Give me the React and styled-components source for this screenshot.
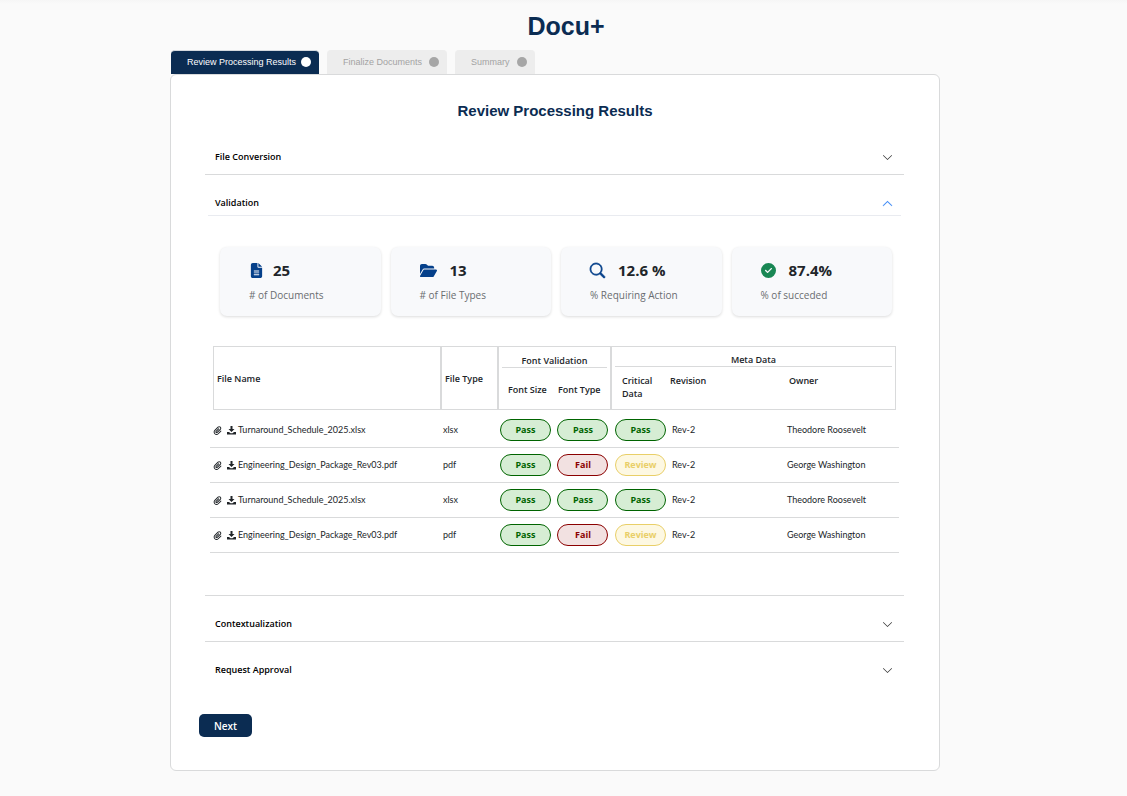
import React from "react";
import styled, { createGlobalStyle, css } from "styled-components";
import { FaFileLines, FaFolderOpen, FaCircleCheck, FaPaperclip } from "react-icons/fa6";
import { BsSearch, BsChevronDown, BsChevronUp } from "react-icons/bs";

const navy = "#0b2c52";
const line = "#d9dadb";
const heading = `"Liberation Sans", Arial, sans-serif`;
const body = `"Open Sans", "Noto Sans", sans-serif`;
const narrow = `Lato, "Open Sans", sans-serif`;

const GlobalStyle = createGlobalStyle`
  * { box-sizing: border-box; }
  body { margin: 0; background: #fafafa; color: #212529; font: 9px/12px ${body}; }
  button { font: inherit; color: inherit; border: 0; background: none; cursor: pointer; }
  h1, h2, h3, p { margin: 0; }
`;

const Page = styled.div`
  min-height: 100vh;
  padding: 8px 17px 25px 0;
  background: linear-gradient(#f6f6f6, #fafafa 4px);
`;
const Shell = styled.main`
  max-width: 770px;
  margin: 0 auto;
`;
const Title = styled.h1`
  font: bold 25px/36px ${heading};
  color: ${navy};
  text-align: center;
  padding-left: 22px;
`;
const Tabs = styled.div`
  display: flex;
  gap: 8px;
  height: 24px;
  margin: 6px 0 0 1px;
`;
const Tab = styled.button`
  display: flex;
  align-items: center;
  gap: ${(p) => (p.$active ? 5 : 7)}px;
  padding: 0 8px 2px 16px;
  border-radius: 4px 4px 0 0;
  border-top: 1px solid ${(p) => (p.$active ? "#d5d9de" : "#ededed")};
  background: ${(p) => (p.$active ? navy : "#ededed")};
  color: ${(p) => (p.$active ? "#fff" : "#a3a3a3")};
  font: 9px/12px ${heading};
  white-space: nowrap;
`;
const Dot = styled.span`
  width: 10px;
  height: 10px;
  border-radius: 50%;
  background: ${(p) => (p.$active ? "#fff" : "#a6a6a6")};
`;
const Card = styled.section`
  border: 1px solid ${line};
  border-radius: 6px;
  background: #fff;
  padding: 26px 28px 33px;
`;
const CardTitle = styled.h2`
  font: bold 15px/20px ${heading};
  color: ${navy};
  text-align: center;
`;
const Accordion = styled.div`
  margin: 8px 7px 0 6px;
`;
const Item = styled.section`
  border-bottom: 1px solid ${line};
  &:last-child { border-bottom: 0; }
`;
const ItemHeader = styled.button`
  display: flex;
  align-items: center;
  justify-content: space-between;
  width: 100%;
  height: 45px;
  padding: 10px 11px 0 10px;
  font-weight: 600;
  color: #000;
  text-align: left;
  svg { width: 11px; height: 11px; margin-top: 2px; color: #333; }
  ${(p) => p.$open && css`
    width: auto;
    align-self: stretch;
    height: 41px;
    margin: 0 3px;
    padding: 16px 8px 0 7px;
    border-bottom: 1px solid #e9ebf0;
    svg { margin-top: 0; color: #2f80f5; stroke: currentColor; stroke-width: 0.4; }
  `}
`;
const OpenItem = styled(Item)`
  display: flex;
  flex-direction: column;
`;
const Stats = styled.div`
  display: grid;
  grid-template-columns: repeat(4, 1fr);
  gap: 10px;
  margin: 31px 12px 0 15px;
`;
const Stat = styled.div`
  height: 69px;
  padding: 13px 10px 0 29px;
  border-radius: 7px;
  background: #f8f9fb;
  box-shadow: 0 1px 3px rgba(0, 0, 0, 0.14);
`;
const StatValue = styled.div`
  display: flex;
  align-items: center;
  gap: ${(p) => p.$gap}px;
  font-size: 15px;
  line-height: 20px;
  font-weight: 700;
  svg { color: ${(p) => p.$color}; }
`;
const StatLabel = styled.p`
  margin-top: 9px;
  color: #6a6d70;
  font-size: 10px;
  white-space: nowrap;
`;
const SearchIcon = styled(BsSearch)`
  stroke: currentColor;
  stroke-width: 0.8;
  overflow: visible;
`;
const Table = styled.table`
  table-layout: fixed;
  width: calc(100% - 10px);
  margin: 30px 5px 42px;
  border-collapse: separate;
  border-spacing: 0;
`;
const Head = styled.thead`
  th {
    padding: 0;
    font-weight: 600;
    text-align: left;
  }
  tr:first-child th { border-top: 1px solid ${line}; }
`;
const NameTh = styled.th`
  border-left: 1px solid ${line};
  border-bottom: 1px solid ${line};
  && { padding: 2px 0 0 3px; }
`;
const TypeTh = styled.th`
  border-left: 2px solid ${line};
  border-bottom: 1px solid ${line};
  && { padding: 2px 0 0 3px; }
`;
const FontGroupTh = styled.th`
  border-left: 2px solid ${line};
  border-right: 2px solid ${line};
`;
const MetaGroupTh = styled.th`
  border-right: 1px solid ${line};
  vertical-align: top;
`;
const GroupLabel = styled.span`
  display: block;
  margin: 0 3px;
  padding: ${(p) => p.$top}px 0 0;
  border-bottom: 1px solid ${line};
  text-align: center;
`;
const SubTh = styled.th`
  height: 42px;
  border-bottom: 1px solid ${line};
  border-left: ${(p) => (p.$left ? `2px solid ${line}` : 0)};
  border-right: ${(p) => (p.$right ? `${p.$right}px solid ${line}` : 0)};
  vertical-align: ${(p) => (p.$topAligned ? "top" : "middle")};
  line-height: 13px;
  && { padding: ${(p) => (p.$topAligned ? 6 : 2)}px 0 0 ${(p) => p.$indent}px; }
`;
const Edge = styled.td`
  padding: 0;
`;
const Body = styled.tbody`
  &::before { content: ""; display: block; height: 3px; }
`;
const Cell = styled.td`
  height: 35px;
  padding: 0 0 0 3px;
  border-bottom: 1px solid ${line};
  font-family: ${narrow};
  text-align: ${(p) => (p.$center ? "center" : "left")};
  white-space: nowrap;
  ${(p) => p.$center && css`padding: 0;`}
`;
const FileName = styled.span`
  display: flex;
  align-items: center;
  a { color: inherit; text-decoration: none; margin-left: 2px; }
`;
const IconButton = styled.button`
  display: flex;
  padding: 0;
  margin-right: ${(p) => p.$after}px;
`;
const colors = {
  Pass: ["#006400", "#d6edd4"],
  Fail: ["#8b0000", "#f2e1e1"],
  Review: ["#e9cf68", "#fdf8e2"],
};
const Pill = styled.span`
  display: inline-block;
  width: 51px;
  height: 22px;
  border: 1px solid ${(p) => colors[p.$status][0]};
  border-radius: 11px;
  background: ${(p) => colors[p.$status][1]};
  color: ${(p) => colors[p.$status][0]};
  font-family: ${body};
  font-weight: 700;
  line-height: 20px;
  text-align: center;
  vertical-align: middle;
`;
const Next = styled.button`
  && {
    width: 53px;
    height: 23px;
    padding: 0;
    margin-top: 27px;
    border-radius: 5px;
    background: ${navy};
    color: #fff;
    font-size: 10px;
    line-height: 12px;
    font-weight: 600;
  }
`;

function DownloadIcon() {
  return (
    <svg width="9" height="9" viewBox="0 0 18 18" fill="currentColor" aria-hidden="true">
      <path d="M7 0h4v6H15l-6 6-6-6h4z" />
      <path d="M0 12h4l3 2.500h4l3-2.500h4v5H0z" />
    </svg>
  );
}

const tabs = ["Review Processing Results", "Finalize Documents", "Summary"];
const stats = [
  { icon: <FaFileLines size={15} />, gap: 9, color: "#05408a", value: "25", label: "# of Documents" },
  { icon: <FaFolderOpen size={17} />, gap: 13, color: "#05408a", value: "13", label: "# of File Types" },
  { icon: <SearchIcon size={15} />, gap: 13, color: "#05408a", value: "12.6 %", label: "% Requiring Action" },
  { icon: <FaCircleCheck size={15} />, gap: 13, color: "#198754", value: "87.4%", label: "% of succeded" },
];
const xlsx = { name: "Turnaround_Schedule_2025.xlsx", type: "xlsx", checks: ["Pass", "Pass", "Pass"], owner: "Theodore Roosevelt" };
const pdf = { name: "Engineering_Design_Package_Rev03.pdf", type: "pdf", checks: ["Pass", "Fail", "Review"], owner: "George Washington" };
const rows = [xlsx, pdf, xlsx, pdf];

function ClosedItem({ title }) {
  return (
    <Item>
      <ItemHeader type="button" aria-expanded="false">
        {title}
        <BsChevronDown />
      </ItemHeader>
    </Item>
  );
}

function ResultsTable() {
  return (
    <Table>
      <colgroup>
        <col style={{ width: 3 }} />
        <col />
        <col style={{ width: 57 }} />
        <col style={{ width: 57 }} />
        <col style={{ width: 58 }} />
        <col style={{ width: 57 }} />
        <col style={{ width: 115 }} />
        <col style={{ width: 112 }} />
        <col style={{ width: 3 }} />
      </colgroup>
      <Head>
        <tr>
          <Edge rowSpan={2} />
          <NameTh rowSpan={2} scope="col">File Name</NameTh>
          <TypeTh rowSpan={2} scope="col">File Type</TypeTh>
          <FontGroupTh colSpan={2} scope="colgroup"><GroupLabel $top={8}>Font Validation</GroupLabel></FontGroupTh>
          <MetaGroupTh colSpan={3} scope="colgroup"><GroupLabel $top={7}>Meta Data</GroupLabel></MetaGroupTh>
          <Edge rowSpan={2} />
        </tr>
        <tr>
          <SubTh scope="col" $left $indent={9}>Font Size</SubTh>
          <SubTh scope="col" $right={2} $indent={4}>Font Type</SubTh>
          <SubTh scope="col" $topAligned $indent={10}>Critical<br />Data</SubTh>
          <SubTh scope="col" $topAligned $indent={1}>Revision</SubTh>
          <SubTh scope="col" $topAligned $right={1} $indent={5}>Owner</SubTh>
        </tr>
      </Head>
      <Body>
        {rows.map((r, i) => (
          <tr key={i}>
            <Cell colSpan={2}>
              <FileName>
                <IconButton type="button" aria-label="Attachment" $after={5}><FaPaperclip size={9} /></IconButton>
                <IconButton type="button" aria-label="Download" $after={0}><DownloadIcon /></IconButton>
                <a href="#file">{r.name}</a>
              </FileName>
            </Cell>
            <Cell>{r.type}</Cell>
            {r.checks.map((c, k) => (
              <Cell key={k} $center><Pill $status={c}>{c}</Pill></Cell>
            ))}
            <Cell>Rev-2</Cell>
            <Cell colSpan={2}>{r.owner}</Cell>
          </tr>
        ))}
      </Body>
    </Table>
  );
}

export default function App() {
  return (
    <Page>
      <GlobalStyle />
      <Shell>
        <Title>Docu+</Title>
        <Tabs role="tablist">
          {tabs.map((t, i) => (
            <Tab key={t} type="button" role="tab" aria-selected={i === 0} $active={i === 0}>
              {t}
              <Dot $active={i === 0} />
            </Tab>
          ))}
        </Tabs>
        <Card>
          <CardTitle>Review Processing Results</CardTitle>
          <Accordion>
            <ClosedItem title="File Conversion" />
            <OpenItem>
              <ItemHeader type="button" aria-expanded="true" $open>
                Validation
                <BsChevronUp />
              </ItemHeader>
              <Stats>
                {stats.map((s) => (
                  <Stat key={s.label}>
                    <StatValue $gap={s.gap} $color={s.color}>{s.icon}{s.value}</StatValue>
                    <StatLabel>{s.label}</StatLabel>
                  </Stat>
                ))}
              </Stats>
              <ResultsTable />
            </OpenItem>
            <ClosedItem title="Contextualization" />
            <ClosedItem title="Request Approval" />
          </Accordion>
          <Next type="button">Next</Next>
        </Card>
      </Shell>
    </Page>
  );
}
